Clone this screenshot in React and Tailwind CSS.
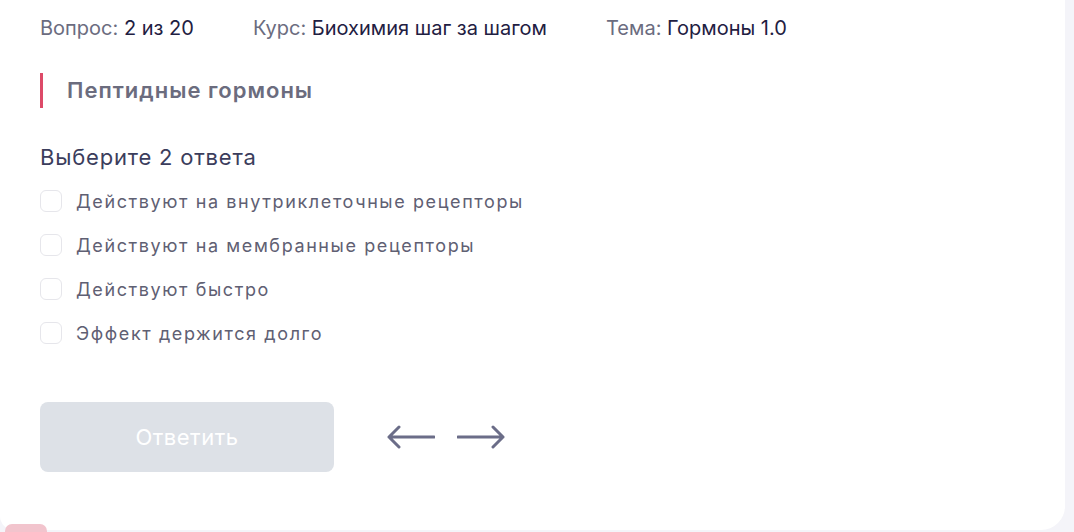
import React from 'react';

const META = [
    { label: 'Вопрос:', value: '2 из 20' },
    { label: 'Курс:', value: 'Биохимия шаг за шагом' },
    { label: 'Тема:', value: 'Гормоны 1.0' },
];

const OPTIONS = [
    'Действуют на внутриклеточные рецепторы',
    'Действуют на мембранные рецепторы',
    'Действуют быстро',
    'Эффект держится долго',
];

export default function App() {
    return (
        <div className="relative w-[1074px] h-[532px] overflow-hidden bg-[#f4f4f9] font-['Inter',sans-serif]">
            <div className="w-[1065px] h-[530px] bg-white rounded-br-[24px] rounded-bl-[14px] px-10 pt-[16px]">
                <div className="flex items-center gap-[59px] text-[20px] leading-[24px]">
                    {META.map(m => (
                        <div key={m.label}>
                            <span className="text-[#6b6c80]">{m.label} </span>
                            <span className="text-[#1f2042]">{m.value}</span>
                        </div>
                    ))}
                </div>

                <div className="mt-[33px] flex items-center h-[35px] border-l-[3px] border-[#dd4a68] pl-[24px]">
                    <h2 className="text-[22px] tracking-[1px] font-semibold text-[#6b6c7e]">Пептидные гормоны</h2>
                </div>

                <p className="mt-[35px] text-[22px] tracking-[0.8px] leading-[28px] text-[#3b3d5c]">Выберите 2 ответа</p>

                <div className="mt-[19px] flex flex-col gap-[22px]">
                    {OPTIONS.map(opt => (
                        <label key={opt} className="flex items-center gap-[14px] h-[22px]">
                            <span className="w-[22px] h-[22px] rounded-[6px] border-[1.5px] border-[#e6e6eb] shrink-0" />
                            <span className="text-[18px] text-[#5f6073] tracking-[1.6px]">{opt}</span>
                        </label>
                    ))}
                </div>

                <div className="mt-[58px] flex items-center">
                    <button className="w-[294px] h-[70px] rounded-[8px] bg-[#dde1e7] text-white text-[22px] tracking-[0.5px]">Ответить</button>
                    <div className="ml-[53px] flex items-center gap-[22px] text-[#6b6d88]">
                        <svg width="48" height="24" viewBox="0 0 48 24" fill="none" stroke="currentColor" strokeWidth="3" strokeLinecap="round" strokeLinejoin="round">
                            <path d="M47 12H2M12 2L2 12l10 10" />
                        </svg>
                        <svg width="48" height="24" viewBox="0 0 48 24" fill="none" stroke="currentColor" strokeWidth="3" strokeLinecap="round" strokeLinejoin="round">
                            <path d="M1 12h45M36 2l10 10-10 10" />
                        </svg>
                    </div>
                </div>
            </div>
            <div className="absolute left-[5px] top-[524px] w-[42px] h-[14px] rounded-full bg-[#f2c4cd]" />
        </div>
    );
}
